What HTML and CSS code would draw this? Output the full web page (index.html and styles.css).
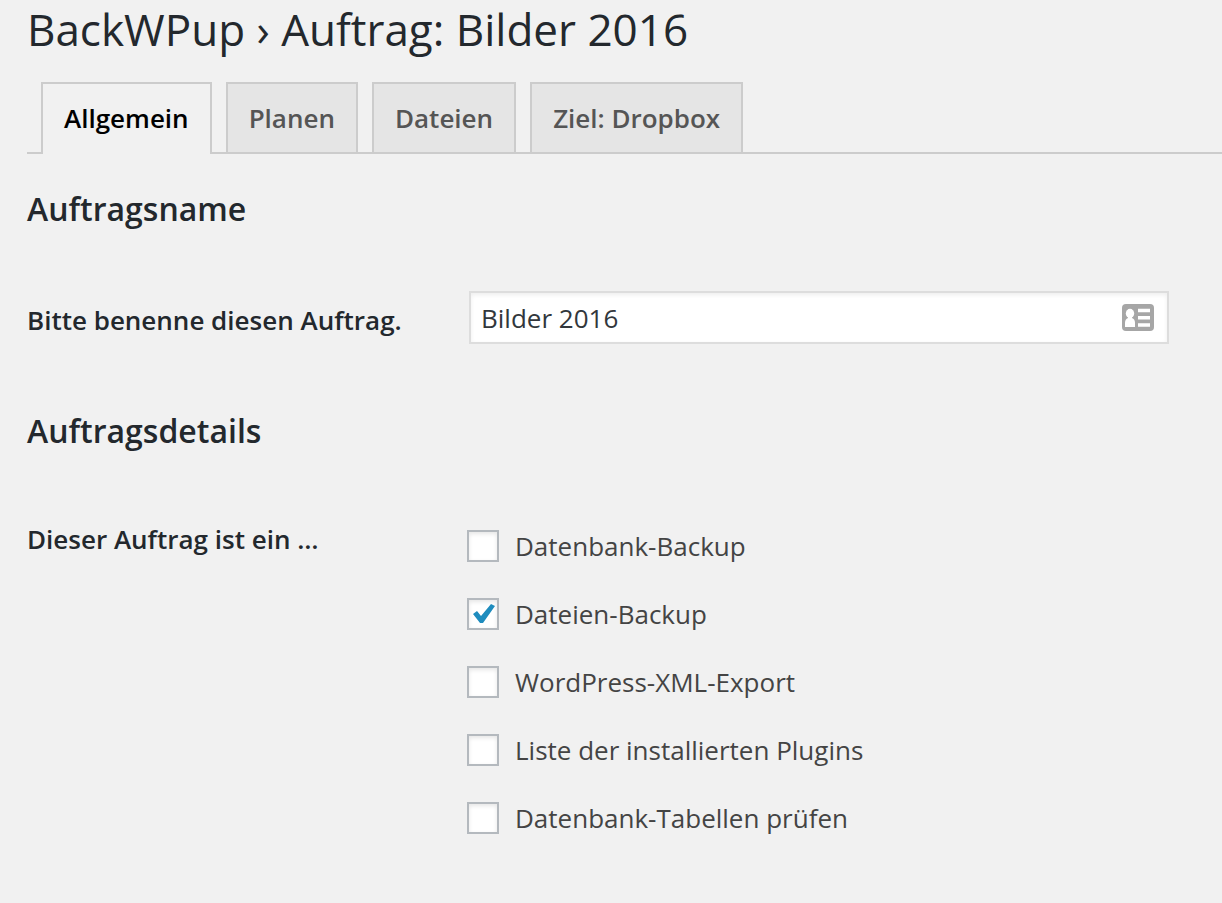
FILE: index.html
```
<!DOCTYPE html>
<html lang="de">
<head>
  <meta charset="UTF-8" />
  <title>BackWPup › Auftrag: Bilder 2016</title>
  <link rel="stylesheet" href="styles.css">
</head>
<body>
  <div class="wrap">
    <h1>BackWPup › Auftrag: Bilder 2016</h1>

    <nav class="tabs">
      <a href="#general" class="tab active">Allgemein</a>
      <a href="#schedule" class="tab">Planen</a>
      <a href="#files" class="tab">Dateien</a>
      <a href="#dropbox" class="tab">Ziel: Dropbox</a>
    </nav>

    <form>
      <h2>Auftragsname</h2>
      <div class="row name-row">
        <label for="jobname" class="row-title">Bitte benenne diesen Auftrag.</label>
        <div class="text-field">
          <input type="text" id="jobname" value="Bilder 2016" />
          <svg class="card-icon" width="32" height="27" viewBox="0 0 32 27">
            <rect width="32" height="27" rx="4" fill="#a6a6a6" />
            <g fill="#fff">
              <ellipse cx="8" cy="9.5" rx="4.2" ry="4.7" />
              <path d="M6 12h4v2c2 .6 3 2.5 3 5v4H3v-4c0-2.5 1-4.400 3-5z" />
              <path d="M16 4.700h12v3.500H16zM16 12h12v3.500H16zM16 19.300h12v3.500H16z" />
            </g>
          </svg>
        </div>
      </div>

      <h2>Auftragsdetails</h2>
      <div class="row type-row" role="group" aria-labelledby="jobtype">
        <span id="jobtype" class="row-title">Dieser Auftrag ist ein …</span>
        <div class="checks">
          <label class="check"><input type="checkbox" /> Datenbank-Backup</label>
          <label class="check"><input type="checkbox" checked /> Dateien-Backup</label>
          <label class="check"><input type="checkbox" /> WordPress-XML-Export</label>
          <label class="check"><input type="checkbox" /> Liste der installierten Plugins</label>
          <label class="check"><input type="checkbox" /> Datenbank-Tabellen prüfen</label>
        </div>
      </div>
    </form>
  </div>
</body>
</html>
```
FILE: styles.css
```
* {
  box-sizing: border-box;
}

body {
  margin: 0;
  background: #f1f1f1;
  color: #444;
  font-family: "Segoe UI", "Open Sans", sans-serif;
  font-size: 26px;
  line-height: 36px;
}

.wrap {
  padding-left: 27px;
}

h1 {
  margin: 0;
  color: #23282d;
  font-size: 44px;
  font-weight: 400;
  line-height: 58px;
}

.tabs {
  display: flex;
  gap: 14px;
  margin-top: 24px;
  padding-left: 14px;
  border-bottom: 2px solid #ccc;
}

.tab {
  padding: 16px 21px;
  border: 2px solid #ccc;
  border-bottom: none;
  background: #e5e5e5;
  color: #555;
  font-weight: 600;
  text-decoration: none;
}

.tab.active {
  margin-bottom: -2px;
  background: #f1f1f1;
  color: #000;
}

h2 {
  margin: 32px 0 59px;
  color: #23282d;
  font-size: 32px;
  font-weight: 600;
  line-height: 46px;
}

.row {
  display: grid;
  grid-template-columns: 440px 1fr;
  margin-right: 53px;
}

.name-row {
  align-items: center;
  margin-bottom: 64px;
}

.name-row .row-title {
  padding-top: 4px;
}

.type-row {
  padding-top: 8px;
}

.row-title {
  color: #23282d;
  font-weight: 600;
}

.text-field {
  position: relative;
  margin-left: 2px;
}

.text-field input {
  display: block;
  width: 100%;
  height: 53px;
  padding: 0 60px 0 10px;
  border: 2px solid #ddd;
  background: #fff;
  box-shadow: inset 0 2px 4px rgba(0, 0, 0, 0.07);
  color: #32373c;
  font: inherit;
  outline: none;
}

.card-icon {
  position: absolute;
  top: 13px;
  right: 15px;
}

.checks {
  display: flex;
  flex-direction: column;
  gap: 32px;
  padding-top: 7px;
}

.check {
  display: flex;
  align-items: center;
  gap: 16px;
}

.check input {
  appearance: none;
  width: 32px;
  height: 32px;
  margin: 0;
  border: 2px solid #b4b9be;
  background: #fff;
  box-shadow: inset 0 2px 4px rgba(0, 0, 0, 0.1);
}

.check input:checked::before {
  content: "";
  display: block;
  width: 28px;
  height: 28px;
  background: #1e8cbe;
  clip-path: polygon(4px 14px, 8px 11px, 12px 16px, 22px 4px, 26px 6px, 14px 23px, 11px 23px);
}
```
